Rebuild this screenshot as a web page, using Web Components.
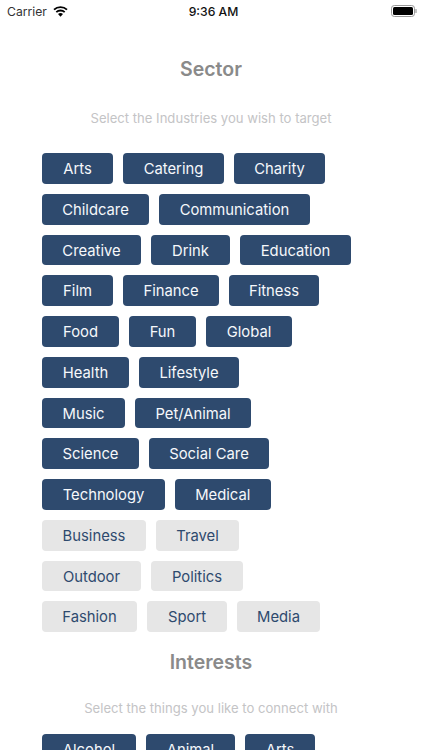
<!DOCTYPE html>
<html>
<head>
<meta charset="utf-8">
<title>Sector</title>
<style>
html, body { margin: 0; padding: 0; background: #fff; height: 750px; overflow: hidden; }
body { font-family: Inter, "Liberation Sans", sans-serif; }
#sector { --top: 35px; --hint-gap: 27px; --tags-gap: 25px; }
#interests { --top: 18px; --hint-gap: 24px; --tags-gap: 16px; }
</style>
</head>
<body>
<status-bar></status-bar>
<tag-section id="sector" heading="Sector" hint="Select the Industries you wish to target">
  <tag-row><tag-pill w="71">Arts</tag-pill><tag-pill w="101">Catering</tag-pill><tag-pill w="91">Charity</tag-pill></tag-row>
  <tag-row><tag-pill w="107">Childcare</tag-pill><tag-pill w="151">Communication</tag-pill></tag-row>
  <tag-row><tag-pill w="99">Creative</tag-pill><tag-pill w="79">Drink</tag-pill><tag-pill w="111">Education</tag-pill></tag-row>
  <tag-row><tag-pill w="71">Film</tag-pill><tag-pill w="96">Finance</tag-pill><tag-pill w="90">Fitness</tag-pill></tag-row>
  <tag-row><tag-pill w="77">Food</tag-pill><tag-pill w="67">Fun</tag-pill><tag-pill w="86">Global</tag-pill></tag-row>
  <tag-row><tag-pill w="87">Health</tag-pill><tag-pill w="100">Lifestyle</tag-pill></tag-row>
  <tag-row><tag-pill w="83">Music</tag-pill><tag-pill w="116">Pet/Animal</tag-pill></tag-row>
  <tag-row><tag-pill w="97">Science</tag-pill><tag-pill w="120">Social Care</tag-pill></tag-row>
  <tag-row><tag-pill w="123">Technology</tag-pill><tag-pill w="95.5">Medical</tag-pill></tag-row>
  <tag-row><tag-pill w="104" off>Business</tag-pill><tag-pill w="83" off>Travel</tag-pill></tag-row>
  <tag-row><tag-pill w="99" off>Outdoor</tag-pill><tag-pill w="92" off>Politics</tag-pill></tag-row>
  <tag-row><tag-pill w="95" off>Fashion</tag-pill><tag-pill w="80" off>Sport</tag-pill><tag-pill w="83" off>Media</tag-pill></tag-row>
</tag-section>
<tag-section id="interests" heading="Interests" hint="Select the things you like to connect with">
  <tag-row><tag-pill w="94">Alcohol</tag-pill><tag-pill w="89">Animal</tag-pill><tag-pill w="70">Arts</tag-pill></tag-row>
</tag-section>
<script>
class StatusBar extends HTMLElement {
    constructor() {
        super();
        this.attachShadow({ mode: 'open' }).innerHTML = `
            <style>
                :host {
                    display: grid;
                    grid-template-columns: 1fr auto 1fr;
                    align-items: center;
                    height: 22px;
                    padding: 0 5px 0 7px;
                    font: 12.2px Inter, "Liberation Sans", sans-serif;
                    color: #111;
                }
                .left { display: flex; align-items: center; gap: 6px; color: #333; }
                .time { font-weight: 500; margin-left: 3px; }
                .right { display: flex; justify-content: flex-end; }
                svg { display: block; }
            </style>
            <div class="left">
                <span>Carrier</span>
                <svg width="15" height="11" viewBox="0 0 15 11">
                    <path d="M7.5 10.8 5 8.1a3.6 3.6 0 0 1 5 0z" fill="#000"/>
                    <path d="M3.3 6.2a6 6 0 0 1 8.4 0" fill="none" stroke="#000" stroke-width="1.8"/>
                    <path d="M1 3.7a9.3 9.3 0 0 1 13 0" fill="none" stroke="#000" stroke-width="1.8"/>
                </svg>
            </div>
            <span class="time">9:36 AM</span>
            <div class="right">
                <svg width="26" height="12" viewBox="0 0 26 12">
                    <rect x=".5" y=".5" width="23" height="11" rx="2.8" fill="none" stroke="#999"/>
                    <rect x="2" y="2" width="20" height="8" rx="1.5" fill="#000"/>
                    <rect x="24.4" y="4" width="1.2" height="4" rx=".6" fill="#999"/>
                </svg>
            </div>
        `;
    }
}

class TagSection extends HTMLElement {
    constructor() {
        super();
        this.attachShadow({ mode: 'open' }).innerHTML = `
            <style>
                :host {
                    display: block;
                    padding-top: var(--top);
                    font-family: Inter, "Liberation Sans", sans-serif;
                    text-align: center;
                }
                h2 {
                    margin: 0;
                    font-size: 19.5px;
                    line-height: 24px;
                    font-weight: 600;
                    color: #8a8a8a;
                }
                p {
                    margin: var(--hint-gap) 0 0;
                    font-size: 13.1px;
                    line-height: 20px;
                    color: #c4c4c6;
                }
                .tags {
                    display: flex;
                    flex-direction: column;
                    gap: 10px;
                    margin-top: var(--tags-gap);
                    padding: 0 42px;
                }
            </style>
            <h2></h2>
            <p></p>
            <div class="tags"><slot></slot></div>
        `;
    }

    connectedCallback() {
        this.shadowRoot.querySelector('h2').textContent = this.getAttribute('heading');
        this.shadowRoot.querySelector('p').textContent = this.getAttribute('hint');
    }
}

class TagRow extends HTMLElement {
    constructor() {
        super();
        this.attachShadow({ mode: 'open' }).innerHTML = `
            <style>
                :host { display: flex; gap: 10px; }
            </style>
            <slot></slot>
        `;
    }
}

class TagPill extends HTMLElement {
    constructor() {
        super();
        this.attachShadow({ mode: 'open' }).innerHTML = `
            <style>
                :host {
                    display: block;
                    flex: none;
                    height: 30.75px;
                    line-height: 33px;
                    text-align: center;
                    border-radius: 4px;
                    font-size: 14.8px;
                    background: #2e4a6e;
                    color: #f6f8fb;
                    white-space: nowrap;
                }
                :host([off]) {
                    background: #e6e6e6;
                    color: #2e4a6e;
                }
            </style>
            <slot></slot>
        `;
    }

    connectedCallback() {
        this.style.width = this.getAttribute('w') + 'px';
    }
}

customElements.define('status-bar', StatusBar);
customElements.define('tag-section', TagSection);
customElements.define('tag-row', TagRow);
customElements.define('tag-pill', TagPill);
</script>
</body>
</html>
